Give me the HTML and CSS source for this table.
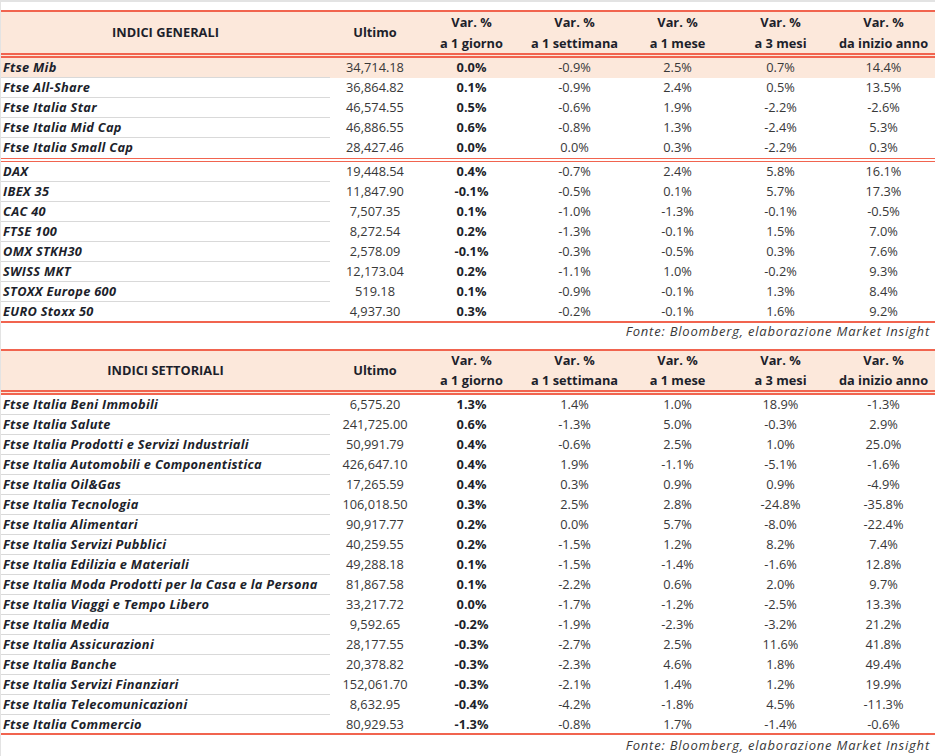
FILE: index.html
```html
<!DOCTYPE html>
<html lang="it">
<head>
<meta charset="utf-8">
<title>Indici</title>
<link rel="stylesheet" href="styles.css">
</head>
<body>
<div class="page">
  <table class="idx">
    <colgroup><col class="c-name"><col class="c-last"><col class="c-var"><col class="c-var"><col class="c-var"><col class="c-var"><col class="c-var"></colgroup>
    <thead>
      <tr>
        <th class="title">INDICI GENERALI</th>
        <th>Ultimo</th>
        <th>Var. %<br>a 1 giorno</th>
        <th>Var. %<br>a 1 settimana</th>
        <th>Var. %<br>a 1 mese</th>
        <th>Var. %<br>a 3 mesi</th>
        <th>Var. %<br>da inizio anno</th>
      </tr>
    </thead>
    <tbody>
      <tr class="hl"><td>Ftse Mib</td><td>34,714.18</td><td>0.0%</td><td>-0.9%</td><td>2.5%</td><td>0.7%</td><td>14.4%</td></tr>
      <tr><td>Ftse All-Share</td><td>36,864.82</td><td>0.1%</td><td>-0.9%</td><td>2.4%</td><td>0.5%</td><td>13.5%</td></tr>
      <tr><td>Ftse Italia Star</td><td>46,574.55</td><td>0.5%</td><td>-0.6%</td><td>1.9%</td><td>-2.2%</td><td>-2.6%</td></tr>
      <tr><td>Ftse Italia Mid Cap</td><td>46,886.55</td><td>0.6%</td><td>-0.8%</td><td>1.3%</td><td>-2.4%</td><td>5.3%</td></tr>
      <tr class="grp-end"><td>Ftse Italia Small Cap</td><td>28,427.46</td><td>0.0%</td><td>0.0%</td><td>0.3%</td><td>-2.2%</td><td>0.3%</td></tr>
      <tr><td>DAX</td><td>19,448.54</td><td>0.4%</td><td>-0.7%</td><td>2.4%</td><td>5.8%</td><td>16.1%</td></tr>
      <tr><td>IBEX 35</td><td>11,847.90</td><td>-0.1%</td><td>-0.5%</td><td>0.1%</td><td>5.7%</td><td>17.3%</td></tr>
      <tr><td>CAC 40</td><td>7,507.35</td><td>0.1%</td><td>-1.0%</td><td>-1.3%</td><td>-0.1%</td><td>-0.5%</td></tr>
      <tr><td>FTSE 100</td><td>8,272.54</td><td>0.2%</td><td>-1.3%</td><td>-0.1%</td><td>1.5%</td><td>7.0%</td></tr>
      <tr><td>OMX STKH30</td><td>2,578.09</td><td>-0.1%</td><td>-0.3%</td><td>-0.5%</td><td>0.3%</td><td>7.6%</td></tr>
      <tr><td>SWISS MKT</td><td>12,173.04</td><td>0.2%</td><td>-1.1%</td><td>1.0%</td><td>-0.2%</td><td>9.3%</td></tr>
      <tr><td>STOXX Europe 600</td><td>519.18</td><td>0.1%</td><td>-0.9%</td><td>-0.1%</td><td>1.3%</td><td>8.4%</td></tr>
      <tr class="last"><td>EURO Stoxx 50</td><td>4,937.30</td><td>0.3%</td><td>-0.2%</td><td>-0.1%</td><td>1.6%</td><td>9.2%</td></tr>
    </tbody>
  </table>
  <p class="source first">Fonte: Bloomberg, elaborazione Market Insight</p>

  <table class="idx sect">
    <colgroup><col class="c-name"><col class="c-last"><col class="c-var"><col class="c-var"><col class="c-var"><col class="c-var"><col class="c-var"></colgroup>
    <thead>
      <tr>
        <th class="title">INDICI SETTORIALI</th>
        <th>Ultimo</th>
        <th>Var. %<br>a 1 giorno</th>
        <th>Var. %<br>a 1 settimana</th>
        <th>Var. %<br>a 1 mese</th>
        <th>Var. %<br>a 3 mesi</th>
        <th>Var. %<br>da inizio anno</th>
      </tr>
    </thead>
    <tbody>
      <tr><td>Ftse Italia Beni Immobili</td><td>6,575.20</td><td>1.3%</td><td>1.4%</td><td>1.0%</td><td>18.9%</td><td>-1.3%</td></tr>
      <tr><td>Ftse Italia Salute</td><td>241,725.00</td><td>0.6%</td><td>-1.3%</td><td>5.0%</td><td>-0.3%</td><td>2.9%</td></tr>
      <tr><td>Ftse Italia Prodotti e Servizi Industriali</td><td>50,991.79</td><td>0.4%</td><td>-0.6%</td><td>2.5%</td><td>1.0%</td><td>25.0%</td></tr>
      <tr><td>Ftse Italia Automobili e Componentistica</td><td>426,647.10</td><td>0.4%</td><td>1.9%</td><td>-1.1%</td><td>-5.1%</td><td>-1.6%</td></tr>
      <tr><td>Ftse Italia Oil&amp;Gas</td><td>17,265.59</td><td>0.4%</td><td>0.3%</td><td>0.9%</td><td>0.9%</td><td>-4.9%</td></tr>
      <tr><td>Ftse Italia Tecnologia</td><td>106,018.50</td><td>0.3%</td><td>2.5%</td><td>2.8%</td><td>-24.8%</td><td>-35.8%</td></tr>
      <tr><td>Ftse Italia Alimentari</td><td>90,917.77</td><td>0.2%</td><td>0.0%</td><td>5.7%</td><td>-8.0%</td><td>-22.4%</td></tr>
      <tr><td>Ftse Italia Servizi Pubblici</td><td>40,259.55</td><td>0.2%</td><td>-1.5%</td><td>1.2%</td><td>8.2%</td><td>7.4%</td></tr>
      <tr><td>Ftse Italia Edilizia e Materiali</td><td>49,288.18</td><td>0.1%</td><td>-1.5%</td><td>-1.4%</td><td>-1.6%</td><td>12.8%</td></tr>
      <tr><td>Ftse Italia Moda Prodotti per la Casa e la Persona</td><td>81,867.58</td><td>0.1%</td><td>-2.2%</td><td>0.6%</td><td>2.0%</td><td>9.7%</td></tr>
      <tr><td>Ftse Italia Viaggi e Tempo Libero</td><td>33,217.72</td><td>0.0%</td><td>-1.7%</td><td>-1.2%</td><td>-2.5%</td><td>13.3%</td></tr>
      <tr><td>Ftse Italia Media</td><td>9,592.65</td><td>-0.2%</td><td>-1.9%</td><td>-2.3%</td><td>-3.2%</td><td>21.2%</td></tr>
      <tr><td>Ftse Italia Assicurazioni</td><td>28,177.55</td><td>-0.3%</td><td>-2.7%</td><td>2.5%</td><td>11.6%</td><td>41.8%</td></tr>
      <tr><td>Ftse Italia Banche</td><td>20,378.82</td><td>-0.3%</td><td>-2.3%</td><td>4.6%</td><td>1.8%</td><td>49.4%</td></tr>
      <tr><td>Ftse Italia Servizi Finanziari</td><td>152,061.70</td><td>-0.3%</td><td>-2.1%</td><td>1.4%</td><td>1.2%</td><td>19.9%</td></tr>
      <tr><td>Ftse Italia Telecomunicazioni</td><td>8,632.95</td><td>-0.4%</td><td>-4.2%</td><td>-1.8%</td><td>4.5%</td><td>-11.3%</td></tr>
      <tr class="last"><td>Ftse Italia Commercio</td><td>80,929.53</td><td>-1.3%</td><td>-0.8%</td><td>1.7%</td><td>-1.4%</td><td>-0.6%</td></tr>
    </tbody>
  </table>
  <p class="source">Fonte: Bloomberg, elaborazione Market Insight</p>
</div>
</body>
</html>
```

FILE: styles.css
```css
html, body {
  margin: 0;
  padding: 0;
  background: #ffffff;
}

.page {
  width: 934px;
  height: 754px;
  overflow: hidden;
  border-top: 2px solid #e3e3e3;
  border-left: 1px solid #e3e3e3;
  padding-top: 8px;
  font-family: "Open Sans", "Noto Sans", sans-serif;
  font-size: 12.8px;
  color: #1d1f2b;
}

.idx {
  width: 934px;
  table-layout: fixed;
  border-collapse: separate;
  border-spacing: 0;
}

.c-name { width: 329px; }
.c-last { width: 90px; }
.c-var { width: 103px; }

.idx th {
  background: #fce8db;
  border-top: 2px solid #f1644f;
  border-bottom: 5px double #f1644f;
  height: 48px;
  padding: 0;
  box-sizing: border-box;
  font-weight: 700;
  line-height: 20.5px;
  text-align: center;
  vertical-align: middle;
  color: #1d1f2b;
  white-space: nowrap;
}

.sect th {
  height: 46px;
  line-height: 19.5px;
}

.idx td {
  height: 20px;
  padding: 0 0 1px;
  box-sizing: border-box;
  border-bottom: 1px solid transparent;
  text-align: center;
  vertical-align: middle;
  line-height: 18px;
  color: #383838;
  white-space: nowrap;
}

.idx td:first-child {
  text-align: left;
  padding-left: 2px;
  font-weight: 700;
  font-style: italic;
  letter-spacing: 0.3px;
  color: #1d1f2b;
  border-bottom-color: #d9d9d9;
}

.idx td:nth-child(3) {
  font-weight: 700;
  color: #1d1f2b;
}

.idx tr.hl td {
  background: #fce8db;
}

.idx tr.grp-end td {
  border-bottom: 4px double #f1644f;
  height: 24px;
  padding-bottom: 2px;
}

.idx tr.last td {
  border-bottom: 2px solid #f1644f;
  height: 21px;
}

.sect tr.last td {
  height: 20px;
  padding-bottom: 0;
}

.source {
  margin: 0;
  height: 21px;
  padding: 2px 5px 0 0;
  box-sizing: border-box;
  text-align: right;
  font-size: 13px;
  letter-spacing: 0.8px;
  font-style: italic;
  line-height: 17px;
  color: #383838;
}

.source.first {
  height: 26px;
  padding-top: 0;
  line-height: 17px;
}
```
